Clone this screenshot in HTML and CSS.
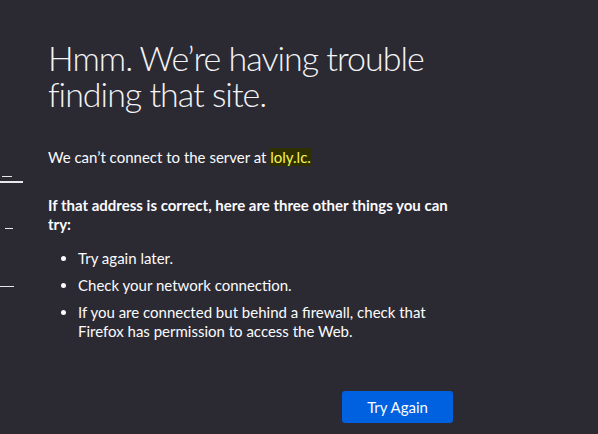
FILE: index.html
```html
<!DOCTYPE html>
<html>
<head>
<meta charset="utf-8">
<link rel="stylesheet" href="styles.css">
</head>
<body>
<div class="edge">
  <span class="mark m1"></span>
  <span class="mark m2"></span>
  <span class="mark m3"></span>
  <span class="mark m4"></span>
</div>
<main class="container">
  <h1 class="title">Hmm. We’re having trouble finding that site.</h1>
  <p class="intro">We can’t connect to the server at <span class="hl">loly.lc.</span></p>
  <p class="strong">If that address is correct, here are three other things you can try:</p>
  <ul class="tips">
    <li>Try again later.</li>
    <li>Check your network connection.</li>
    <li>If you are connected but behind a firewall, check that Firefox has permission to access the Web.</li>
  </ul>
  <div class="actions">
    <button class="btn">Try Again</button>
  </div>
</main>
</body>
</html>
```
FILE: styles.css
```css
html, body {
  margin: 0;
  padding: 0;
  background: #2b2a33;
  color: #fbfbfe;
  font-family: "Lato", "Open Sans", sans-serif;
  height: 100%;
  overflow: hidden;
}
.container {
  width: 410px;
  padding: 40px 0 0 48px;
}
.title {
  margin: 0;
  width: 400px;
  font-family: "Lato", sans-serif;
  font-weight: 300;
  font-size: 34px;
  letter-spacing: -1px;
  font-variant-ligatures: none;
  line-height: 36px;
  color: #f4f4f7;
}
.intro {
  margin: 35px 0 0;
  font-size: 15px;
  line-height: 20px;
}
.hl {
  background: #2f3000;
  color: #f7f55a;
}
.strong {
  margin: 29px 0 0;
  font-weight: 700;
  font-size: 15px;
  line-height: 19px;
}
.tips {
  margin: 15px 0 0;
  padding-left: 30px;
  font-size: 15px;
  line-height: 19px;
}
.tips li {
  margin-bottom: 8px;
}
.actions {
  display: flex;
  justify-content: flex-end;
  margin-top: 50px;
  width: 405px;
}
.btn {
  background: #0061e0;
  color: #fbfbfe;
  border: none;
  border-radius: 3px;
  font-family: "Lato", sans-serif;
  font-size: 15px;
  width: 111px;
  height: 32px;
  padding: 0;
}
.edge {
  position: absolute;
  left: 0;
  top: 0;
}
.mark {
  position: absolute;
  display: block;
  background: #e8e8ec;
  height: 1px;
}
.m1 { left: 0; top: 181px; width: 23px; height: 2px; }
.m2 { left: 2px; top: 176px; width: 10px; }
.m3 { left: 5px; top: 228px; width: 8px; }
.m4 { left: 0; top: 286px; width: 14px; }
```
